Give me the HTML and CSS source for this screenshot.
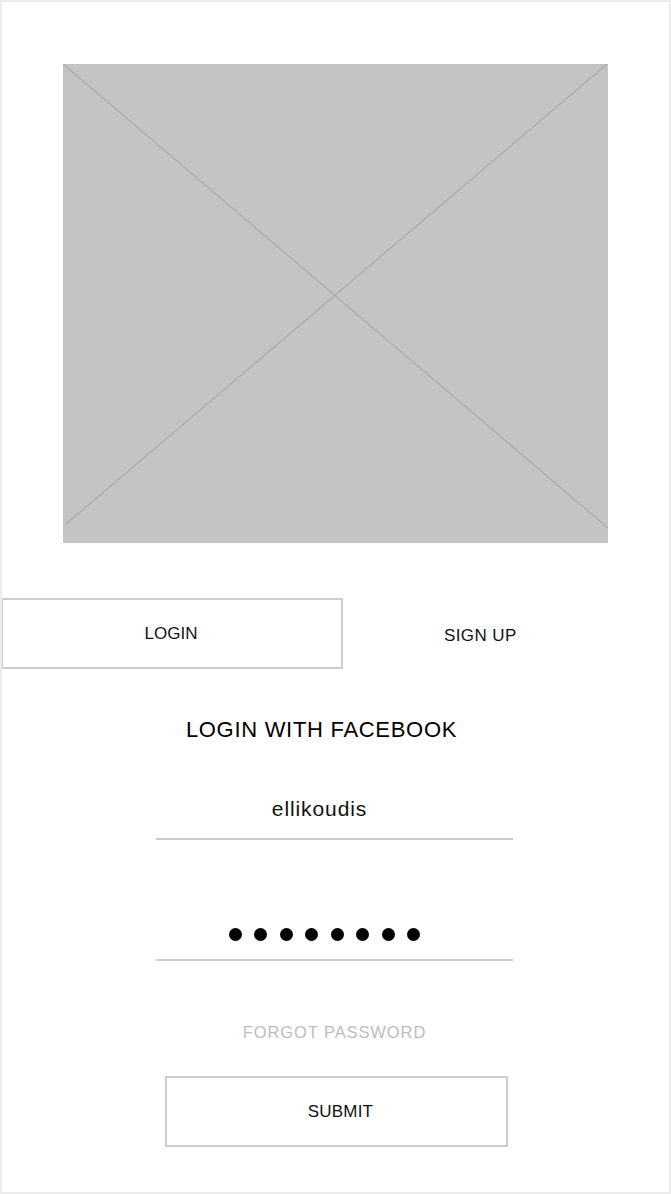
FILE: index.html
```html
<!DOCTYPE html>
<html lang="en">
<head>
<meta charset="utf-8">
<title>Login</title>
<link rel="stylesheet" href="styles.css">
</head>
<body>
<div class="frame">
  <div class="hero">
    <svg class="hero-x" width="545" height="479" viewBox="0 0 545 479" aria-hidden="true">
      <line x1="0" y1="0" x2="545" y2="464" />
      <line x1="544" y1="0" x2="3" y2="460" />
    </svg>
  </div>

  <div class="tabs">
    <div class="tab tab-active">LOGIN</div>
    <div class="tab-signup">SIGN UP</div>
  </div>

  <div class="facebook">LOGIN WITH FACEBOOK</div>

  <div class="field field-user">
    <span class="user-text">ellikoudis</span>
  </div>

  <div class="field field-pass">
    <div class="dots">
      <span class="dot"></span><span class="dot"></span><span class="dot"></span><span class="dot"></span>
      <span class="dot"></span><span class="dot"></span><span class="dot"></span><span class="dot"></span>
    </div>
  </div>

  <div class="forgot">FORGOT PASSWORD</div>

  <div class="submit">SUBMIT</div>
</div>
</body>
</html>
```

FILE: styles.css
```css
* { box-sizing: border-box; }

html, body {
  margin: 0;
  padding: 0;
  background: #ffffff;
}

.frame {
  width: 671px;
  height: 1194px;
  border: 2px solid #ececec;
  font-family: "Liberation Sans", Arial, sans-serif;
  color: #111;
  overflow: hidden;
}

.hero {
  width: 545px;
  height: 479px;
  margin: 62px 0 0 61px;
  background: #c4c4c4;
}

.hero-x {
  display: block;
}

.hero-x line {
  stroke: #a9a9a9;
  stroke-width: 1.2;
}

.tabs {
  display: flex;
  align-items: center;
  margin-top: 55px;
}

.tab {
  width: 341px;
  height: 71px;
  border: 2px solid #cdcdcd;
  border-left-width: 1px;
  display: flex;
  align-items: center;
  justify-content: center;
  padding-right: 2px;
  font-size: 17px;
  color: #111;
}

.tab-signup {
  margin-left: 101px;
  padding-top: 5px;
  font-size: 17px;
  letter-spacing: 0.4px;
  color: #111;
}

.facebook {
  margin-top: 48px;
  height: 26px;
  line-height: 26px;
  text-align: center;
  padding-right: 28px;
  font-size: 22px;
  letter-spacing: 0.7px;
  color: #000;
}

.field {
  width: 357px;
  margin-left: 154px;
  border-bottom: 2px solid #cccccc;
  display: flex;
  justify-content: center;
}

.field-user {
  margin-top: 54px;
  padding: 0 30px 17px 0;
}

.user-text {
  display: block;
  height: 24px;
  line-height: 24px;
  font-size: 21px;
  letter-spacing: 0.9px;
  color: #111;
}

.field-pass {
  margin-top: 88px;
  padding: 0 20px 18px 0;
}

.dots {
  display: flex;
  gap: 12.5px;
}

.dot {
  width: 13px;
  height: 13px;
  border-radius: 50%;
  background: #000;
}

.forgot {
  margin-top: 61px;
  height: 20px;
  line-height: 20px;
  text-align: center;
  padding-right: 2px;
  font-size: 16.5px;
  letter-spacing: 0.9px;
  color: #bdbdbd;
}

.submit {
  width: 343px;
  height: 71px;
  margin: 34px 0 0 163px;
  border: 2px solid #cdcdcd;
  display: flex;
  align-items: center;
  justify-content: center;
  padding-left: 8px;
  font-size: 17px;
  letter-spacing: 0.2px;
  color: #111;
}
```
